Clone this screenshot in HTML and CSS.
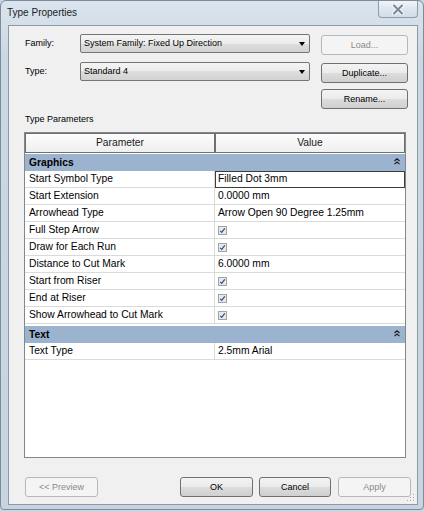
FILE: index.html
```html
<!DOCTYPE html>
<html>
<head>
<meta charset="utf-8">
<link rel="stylesheet" href="styles.css">
</head>
<body>
<div class="window">
  <div class="titlebar">
    <span class="title">Type Properties</span>
    <span class="close">
      <svg width="14" height="11" viewBox="0 0 14 11">
        <path d="M3 1.5 L11 9.5 M11 1.5 L3 9.5" stroke="#f4f7fa" stroke-width="4" stroke-linecap="round"/>
        <path d="M3 1.5 L11 9.5 M11 1.5 L3 9.5" stroke="#7a8794" stroke-width="2" stroke-linecap="round"/>
      </svg>
    </span>
  </div>
  <div class="client">
    <div class="form">
      <div class="frow">
        <span class="flabel">Family:</span>
        <div class="combo"><span>System Family: Fixed Up Direction</span><span class="arrow"></span></div>
        <div class="btn disabled">Load...</div>
      </div>
      <div class="frow r2">
        <span class="flabel">Type:</span>
        <div class="combo"><span>Standard 4</span><span class="arrow"></span></div>
        <div class="btn">Duplicate...</div>
      </div>
      <div class="frow r3">
        <div class="btn">Rename...</div>
      </div>
    </div>
    <div class="section-label">Type Parameters</div>
    <div class="grid">
      <div class="ghead">
        <div class="hcell">Parameter</div>
        <div class="hcell">Value</div>
      </div>
      <div class="group first"><span>Graphics</span>
        <svg class="chev" width="6" height="7" viewBox="0 0 6 7"><path d="M0.5 3 L3 0.8 L5.5 3 M0.5 6.2 L3 4 L5.5 6.2" stroke="#1a1a1a" stroke-width="1.1" fill="none"/></svg>
      </div>
      <div class="row"><div class="pcell">Start Symbol Type</div><div class="vcell sel">Filled Dot 3mm</div></div>
      <div class="row"><div class="pcell">Start Extension</div><div class="vcell">0.0000 mm</div></div>
      <div class="row"><div class="pcell">Arrowhead Type</div><div class="vcell">Arrow Open 90 Degree 1.25mm</div></div>
      <div class="row"><div class="pcell">Full Step Arrow</div><div class="vcell"><svg class="cb" width="9" height="9" viewBox="0 0 9 9"><rect x="0.5" y="0.5" width="8" height="8" fill="#e9e9e9" stroke="#a3a3a3"/><path d="M2.2 4.8 L3.7 6.3 L6.8 2.4" stroke="#2a4a9e" stroke-width="1.2" fill="none"/></svg></div></div>
      <div class="row"><div class="pcell">Draw for Each Run</div><div class="vcell"><svg class="cb" width="9" height="9" viewBox="0 0 9 9"><rect x="0.5" y="0.5" width="8" height="8" fill="#e9e9e9" stroke="#a3a3a3"/><path d="M2.2 4.8 L3.7 6.3 L6.8 2.4" stroke="#2a4a9e" stroke-width="1.2" fill="none"/></svg></div></div>
      <div class="row"><div class="pcell">Distance to Cut Mark</div><div class="vcell">6.0000 mm</div></div>
      <div class="row"><div class="pcell">Start from Riser</div><div class="vcell"><svg class="cb" width="9" height="9" viewBox="0 0 9 9"><rect x="0.5" y="0.5" width="8" height="8" fill="#e9e9e9" stroke="#a3a3a3"/><path d="M2.2 4.8 L3.7 6.3 L6.8 2.4" stroke="#2a4a9e" stroke-width="1.2" fill="none"/></svg></div></div>
      <div class="row"><div class="pcell">End at Riser</div><div class="vcell"><svg class="cb" width="9" height="9" viewBox="0 0 9 9"><rect x="0.5" y="0.5" width="8" height="8" fill="#e9e9e9" stroke="#a3a3a3"/><path d="M2.2 4.8 L3.7 6.3 L6.8 2.4" stroke="#2a4a9e" stroke-width="1.2" fill="none"/></svg></div></div>
      <div class="row"><div class="pcell">Show Arrowhead to Cut Mark</div><div class="vcell"><svg class="cb" width="9" height="9" viewBox="0 0 9 9"><rect x="0.5" y="0.5" width="8" height="8" fill="#e9e9e9" stroke="#a3a3a3"/><path d="M2.2 4.8 L3.7 6.3 L6.8 2.4" stroke="#2a4a9e" stroke-width="1.2" fill="none"/></svg></div></div>
      <div class="group"><span>Text</span>
        <svg class="chev" width="6" height="7" viewBox="0 0 6 7"><path d="M0.5 3 L3 0.8 L5.5 3 M0.5 6.2 L3 4 L5.5 6.2" stroke="#1a1a1a" stroke-width="1.1" fill="none"/></svg>
      </div>
      <div class="row"><div class="pcell">Text Type</div><div class="vcell">2.5mm Arial</div></div>
    </div>
    <div class="footer">
      <div class="btn fbtn disabled">&lt;&lt; Preview</div>
      <div class="btn fbtn ok">OK</div>
      <div class="btn fbtn cancel">Cancel</div>
      <div class="btn fbtn apply disabled">Apply</div>
    </div>
    <svg class="grip" width="8" height="8" viewBox="0 0 8 8">
      <rect x="6" y="0" width="1" height="1" fill="#a8a8a8"/>
      <rect x="3" y="3" width="1" height="1" fill="#a8a8a8"/>
      <rect x="6" y="3" width="1" height="1" fill="#a8a8a8"/>
      <rect x="0" y="6" width="1" height="1" fill="#a8a8a8"/>
      <rect x="3" y="6" width="1" height="1" fill="#a8a8a8"/>
      <rect x="6" y="6" width="1" height="1" fill="#a8a8a8"/>
    </svg>
  </div>
</div>
</body>
</html>
```
FILE: styles.css
```css
html, body {
  margin: 0;
  padding: 0;
}
body {
  width: 424px;
  height: 512px;
  overflow: hidden;
  background: #c9d5e1;
  font-family: "Liberation Sans", Arial, sans-serif;
  color: #000;
}
.window {
  box-sizing: border-box;
  width: 424px;
  height: 510px;
  background: linear-gradient(#dae4ee, #cad7e4 60px, #c7d4e1);
  border: 1px solid #7f8b97;
  border-radius: 6px 6px 4px 4px;
  padding: 0 5px 4px 7px;
  display: flex;
  flex-direction: column;
}
.titlebar {
  height: 24px;
  flex: none;
  display: flex;
  justify-content: space-between;
  align-items: flex-start;
}
.title {
  font-size: 10px;
  line-height: 12px;
  color: #1b1b1b;
  margin-top: 6px;
  margin-left: -1px;
}
.close {
  box-sizing: border-box;
  width: 40px;
  height: 17px;
  border: 1px solid #8e9bab;
  border-top: none;
  border-radius: 0 0 4px 4px;
  background: linear-gradient(#f1f5f9, #dde6ee 50%, #d2dde8);
  display: flex;
  align-items: center;
  justify-content: center;
}
.client {
  flex: 1;
  position: relative;
  box-sizing: border-box;
  background: #f0f0f0;
  border: 1px solid #8d99a5;
  display: flex;
  flex-direction: column;
}
.form {
  padding: 8px 0 0 16px;
}
.frow {
  display: flex;
  align-items: flex-start;
  height: 20px;
}
.frow.r2 {
  margin-top: 8px;
}
.frow.r3 {
  margin-top: 6px;
  padding-left: 296px;
}
.flabel {
  width: 55px;
  font-size: 9px;
  line-height: 18px;
}
.combo {
  box-sizing: border-box;
  width: 230px;
  height: 19px;
  margin-right: 11px;
  border: 1px solid #757575;
  border-radius: 2px;
  background: linear-gradient(#f4f4f4, #ececec 50%, #dedede 50%, #d2d2d2);
  font-size: 9px;
  line-height: 17px;
  padding-left: 3px;
  display: flex;
  justify-content: space-between;
  align-items: center;
}
.arrow {
  width: 0;
  height: 0;
  border-left: 3.5px solid transparent;
  border-right: 3.5px solid transparent;
  border-top: 4px solid #000;
  margin-right: 4px;
}
.btn {
  box-sizing: border-box;
  width: 87px;
  height: 20px;
  border: 1px solid #707070;
  border-radius: 3px;
  background: linear-gradient(#f3f3f3, #ebebeb 50%, #dddddd 50%, #cfcfcf);
  font-size: 9px;
  line-height: 18px;
  text-align: center;
  margin-top: 1px;
}
.btn.disabled {
  border-color: #b5b9bc;
  background: #f4f4f4;
  color: #8a8a8a;
}
.section-label {
  font-size: 9px;
  line-height: 12px;
  margin: 5px 0 0 16px;
}
.grid {
  box-sizing: border-box;
  width: 382px;
  height: 326px;
  margin: 7px 0 0 15px;
  border: 1px solid #82878f;
  background: #fff;
  font-size: 10.3px;
  display: flex;
  flex-direction: column;
}
.ghead {
  display: flex;
  height: 20px;
  flex: none;
}
.hcell {
  box-sizing: border-box;
  width: 190px;
  border: 1px solid #6f6f6f;
  background: linear-gradient(#fcfcfc, #efefef);
  text-align: center;
  line-height: 18px;
  color: #1a1a1a;
}
.hcell + .hcell {
  width: 190px;
}
.group {
  flex: none;
  height: 17px;
  margin-top: 2px;
  background: #9bb3cf;
  font-weight: bold;
  line-height: 17px;
  padding: 0 5px 0 4px;
  display: flex;
  justify-content: space-between;
  align-items: center;
}
.group.first {
  margin-top: 1px;
}
.chev {
  margin-top: -3px;
}
.row {
  flex: none;
  display: flex;
  box-sizing: border-box;
  height: 17px;
  border-bottom: 1px solid #dadada;
}
.pcell {
  box-sizing: border-box;
  width: 190px;
  border-right: 1px solid #dadada;
  padding-left: 4px;
  line-height: 16px;
  white-space: nowrap;
}
.vcell {
  flex: 1;
  padding-left: 3px;
  line-height: 16px;
  white-space: nowrap;
}
.vcell.sel {
  box-shadow: inset 0 0 0 1px #3c3c3c;
  margin-bottom: -1px;
  position: relative;
}
.cb {
  display: block;
  margin-top: 4px;
}
.footer {
  display: flex;
  margin: 19px 0 0 16px;
}
.fbtn {
  width: 73px;
  margin-top: 0;
}
.fbtn.ok {
  margin-left: 82px;
}
.fbtn.cancel {
  width: 72px;
  margin-left: 6px;
}
.fbtn.apply {
  margin-left: 7px;
}
.grip {
  position: absolute;
  right: 2px;
  bottom: 2px;
}
```
